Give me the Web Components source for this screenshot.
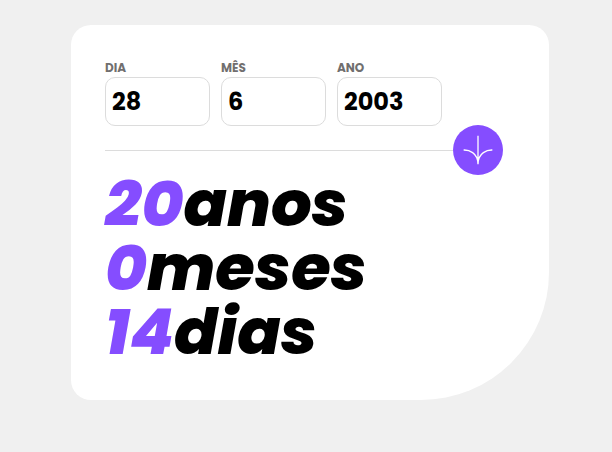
<!DOCTYPE html>
<html lang="pt-BR">
<head>
<meta charset="utf-8">
<title>Calculadora de idade</title>
<style>
body { margin: 0; min-height: 100vh; background: #f0f0f0; font-family: Poppins, Inter, "Open Sans", sans-serif; }
</style>
</head>
<body>
<age-calculator></age-calculator>
<script>
customElements.define('date-field', class extends HTMLElement {
  connectedCallback() {
    const root = this.attachShadow({ mode: 'open' });
    root.innerHTML = `
      <style>
        :host { display: block; flex: 1; min-width: 0; }
        label { display: block; font-size: 12px; line-height: 16px; font-weight: 700; color: #716f6f; }
        input { display: block; box-sizing: border-box; width: 100%; height: 49px; margin: 1px 0 0; padding: 0 6px;
          border: 1px solid #dcdcdc; border-radius: 10px; background: #fff; color: #000;
          font: 700 24px/32px Poppins, "Open Sans", sans-serif; outline: none; }
        input:focus-visible { border-color: #854dff; }
      </style>
      <label for="f"></label><input id="f" type="text" inputmode="numeric">`;
    root.querySelector('label').textContent = this.getAttribute('label');
    root.querySelector('input').value = this.getAttribute('value');
  }
});
customElements.define('age-line', class extends HTMLElement {
  connectedCallback() {
    this.attachShadow({ mode: 'open' }).innerHTML = `
      <style>
        :host { display: block; font: italic 800 64px/64px Poppins, Inter, sans-serif; color: #000; white-space: nowrap; }
        ::slotted(span) { color: #854dff; }
      </style><slot name="value"></slot><slot></slot>`;
  }
});
customElements.define('age-calculator', class extends HTMLElement {
  connectedCallback() {
    this.attachShadow({ mode: 'open' }).innerHTML = `
      <style>
        :host { display: block; box-sizing: border-box; padding: 25px 63px 52px 71px; }
        main { background: #fff; border-radius: 20px 20px 128px 20px; padding: 35px 46px 36px 34px; }
        form { margin: 0; }
        .fields { display: flex; gap: 11px; padding-right: 61px; }
        .action { display: flex; align-items: center; margin: -1px 0 -3px; }
        .rule { flex: 1; height: 1px; background: #dcdcdc; }
        button { width: 50px; height: 50px; padding: 0; border: 0; border-radius: 50%; background: #854dff; display: grid; place-items: center; }
        svg { display: block; }
      </style>
      <main>
        <form>
          <div class="fields">
            <date-field label="DIA" value="28"></date-field>
            <date-field label="MÊS" value="6"></date-field>
            <date-field label="ANO" value="2003"></date-field>
          </div>
          <div class="action"><div class="rule"></div>
            <button type="button" aria-label="Calcular"><svg width="30" height="30" viewBox="0 0 46 46" fill="none" stroke="#fff" stroke-width="2"><path d="M1 23.019C8.333 22.686 23 26.616 23 45M23 45V1M45 23.019C37.667 22.686 23 26.616 23 45"/></svg></button>
          </div>
        </form>
        <age-line><span slot="value">20</span>anos</age-line>
        <age-line><span slot="value">0</span>meses</age-line>
        <age-line><span slot="value">14</span>dias</age-line>
      </main>`;
  }
});
</script>
</body>
</html>
